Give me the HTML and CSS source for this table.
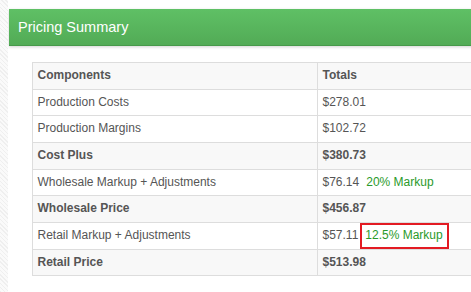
FILE: index.html
```html
<!DOCTYPE html>
<html>
<head>
<meta charset="utf-8">
<link rel="stylesheet" href="styles.css">
</head>
<body>
<div class="panel">
  <div class="header"><span class="title">Pricing Summary</span></div>
  <table class="summary">
    <tr class="strong"><td class="c1">Components</td><td class="c2">Totals</td></tr>
    <tr><td class="c1">Production Costs</td><td class="c2">$278.01</td></tr>
    <tr><td class="c1">Production Margins</td><td class="c2">$102.72</td></tr>
    <tr class="strong"><td class="c1">Cost Plus</td><td class="c2">$380.73</td></tr>
    <tr><td class="c1">Wholesale Markup + Adjustments</td><td class="c2">$76.14<span class="markup">20% Markup</span></td></tr>
    <tr class="strong"><td class="c1">Wholesale Price</td><td class="c2">$456.87</td></tr>
    <tr><td class="c1">Retail Markup + Adjustments</td><td class="c2">$57.11<span class="markup highlight">12.5% Markup</span></td></tr>
    <tr class="strong"><td class="c1">Retail Price</td><td class="c2">$513.98</td></tr>
  </table>
</div>
</body>
</html>
```
FILE: styles.css
```css
html, body {
  margin: 0;
  padding: 0;
  width: 471px;
  height: 292px;
  overflow: hidden;
}
body {
  background-color: #f7f7f7;
  background-image: repeating-linear-gradient(45deg, #efefef 0 1px, #fafafa 1px 3px);
  font-family: "Liberation Sans", Arial, sans-serif;
}
.panel {
  margin-left: 8px;
  width: 463px;
  height: 292px;
  overflow: hidden;
  background: #ffffff;
  padding-top: 9px;
  padding-left: 1px;
  box-sizing: border-box;
}
.header {
  width: 500px;
  height: 36px;
  background: linear-gradient(#5fc065, #52ab56);
  border-bottom: 1px solid #46994a;
  box-shadow: 0 1px 3px rgba(0, 0, 0, 0.18);
  display: flex;
  align-items: center;
  padding-left: 9px;
  box-sizing: content-box;
}
.title {
  color: #ffffff;
  font-size: 14.5px;
  padding-bottom: 1px;
}
.summary {
  margin: 16px 0 0 22.5px;
  border-collapse: collapse;
  width: 520px;
  font-size: 12px;
  color: #555555;
}
.summary td {
  border: 1px solid #dddddd;
  padding: 0 5px;
  height: 25.67px;
  line-height: 25.67px;
  white-space: nowrap;
  vertical-align: middle;
}
.c1 {
  width: 274px;
}
.strong td {
  background: #f8f8f8;
  font-weight: bold;
}
.markup {
  display: inline-block;
  color: #2a9a2a;
  margin-left: 2px;
  padding: 0 4px 0 3px;
  border: 2px solid transparent;
  line-height: 21.67px;
  vertical-align: top;
}
.highlight {
  border-color: #e31b23;
}
```
